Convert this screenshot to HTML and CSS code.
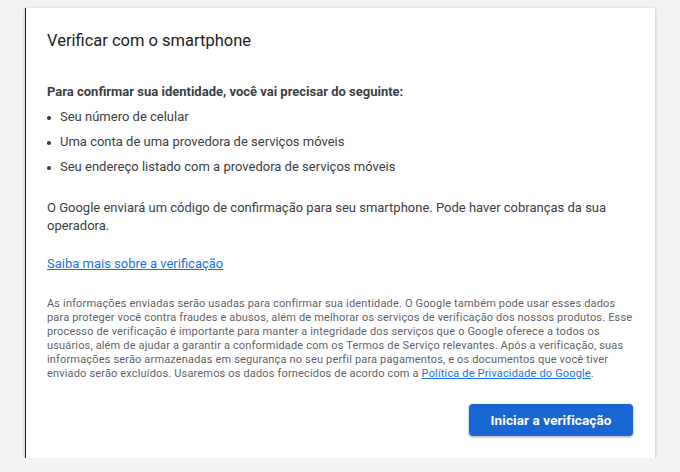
FILE: index.html
```html
<!DOCTYPE html>
<html lang="pt-BR">
<head>
<meta charset="utf-8">
<title>Verificar com o smartphone</title>
<link rel="stylesheet" href="styles.css">
</head>
<body>
<div class="card">
  <h1 class="title">Verificar com o smartphone</h1>
  <p class="lead">Para confirmar sua identidade, você vai precisar do seguinte:</p>
  <ul class="reqs">
    <li>Seu número de celular</li>
    <li>Uma conta de uma provedora de serviços móveis</li>
    <li>Seu endereço listado com a provedora de serviços móveis</li>
  </ul>
  <p class="para">O Google enviará um código de confirmação para seu smartphone. Pode haver cobranças da sua operadora.</p>
  <p class="para link-row"><a href="#" class="link">Saiba mais sobre a verificação</a></p>
  <p class="fine">As informações enviadas serão usadas para confirmar sua identidade. O Google também pode usar esses dados para proteger você contra fraudes e abusos, além de melhorar os serviços de verificação dos nossos produtos. Esse processo de verificação é importante para manter a integridade dos serviços que o Google oferece a todos os usuários, além de ajudar a garantir a conformidade com os Termos de Serviço relevantes. Após a verificação, suas informações serão armazenadas em segurança no seu perfil para pagamentos, e os documentos que você tiver enviado serão excluídos. Usaremos os dados fornecidos de acordo com a <a href="#" class="link">Política de Privacidade do Google</a>.</p>
  <div class="actions">
    <button class="btn">Iniciar a verificação</button>
  </div>
</div>
</body>
</html>
```
FILE: styles.css
```css
html, body {
  margin: 0;
  padding: 0;
}
body {
  background: #f1f3f4;
  font-family: Roboto, "Liberation Sans", Arial, sans-serif;
  color: #3c4043;
  padding: 8px 0 0 25px;
}
.card {
  box-sizing: border-box;
  width: 630px;
  height: 450px;
  background: #fff;
  border-left: 1px solid #202124;
  box-shadow: 0 1px 3px rgba(60, 64, 67, 0.35);
  padding: 21px 22px 22px 21px;
  display: flex;
  flex-direction: column;
}
.title {
  margin: 0;
  font-size: 16.5px;
  line-height: 24px;
  font-weight: 400;
  color: #202124;
}
.lead {
  margin: 29px 0 0;
  font-size: 13px;
  line-height: 20px;
  font-weight: 700;
  color: #3c4043;
}
.reqs {
  list-style: none;
  margin: 5px 0 0;
  padding: 0;
}
.reqs li {
  position: relative;
  font-size: 13px;
  line-height: 20px;
  padding-left: 13px;
  margin-bottom: 5px;
}
.reqs li:last-child {
  margin-bottom: 0;
}
.reqs li::before {
  content: "";
  position: absolute;
  left: 0;
  top: 9px;
  width: 3.5px;
  height: 3.5px;
  border-radius: 50%;
  background: #3c4043;
}
.para {
  margin: 22px 0 0;
  font-size: 13px;
  line-height: 18px;
}
.link-row {
  margin-top: 20px;
}
.link {
  color: #1a73e8;
  text-decoration: underline;
}
.fine {
  margin: 24px -2px 0 0;
  font-size: 11px;
  line-height: 14px;
  letter-spacing: 0.16px;
  color: #5f6368;
}
.actions {
  margin-top: auto;
  display: flex;
  justify-content: flex-end;
}
.btn {
  width: 164px;
  height: 32px;
  border: none;
  border-radius: 4px;
  background: #1967d2;
  color: #fff;
  font-family: Roboto, "Liberation Sans", Arial, sans-serif;
  font-size: 13.5px;
  font-weight: 700;
  letter-spacing: 0.1px;
  box-shadow: 0 1px 2px rgba(60, 64, 67, 0.3), 0 1px 3px 1px rgba(60, 64, 67, 0.15);
  cursor: pointer;
}
```
